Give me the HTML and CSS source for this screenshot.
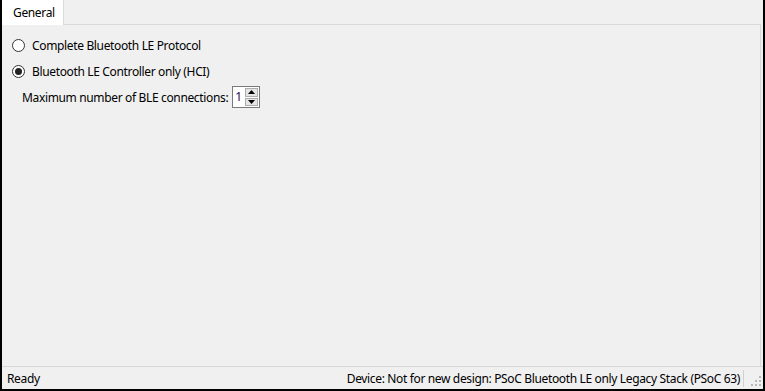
FILE: index.html
```html
<!DOCTYPE html>
<html>
<head>
<meta charset="utf-8">
<link rel="stylesheet" href="styles.css">
</head>
<body>
<div class="window">
  <div class="tabarea">
    <div class="tabstrip">
      <div class="tab">General</div>
      <div class="tabfill"></div>
    </div>
    <div class="panel">
      <label class="radio-row">
        <span class="radio"></span>
        <span>Complete Bluetooth LE Protocol</span>
      </label>
      <label class="radio-row">
        <span class="radio checked"></span>
        <span>Bluetooth LE Controller only (HCI)</span>
      </label>
      <div class="field-row">
        <span>Maximum number of BLE connections:</span>
        <div class="spin">
          <span class="spin-value">1</span>
          <div class="spin-buttons">
            <div class="spin-btn"><svg width="7" height="4" viewBox="0 0 7 4"><path d="M0 4 L3.5 0 L7 4 Z" fill="#000"/></svg></div>
            <div class="spin-btn"><svg width="7" height="4" viewBox="0 0 7 4"><path d="M0 0 L3.5 4 L7 0 Z" fill="#000"/></svg></div>
          </div>
        </div>
      </div>
    </div>
  </div>
  <div class="statusbar">
    <span class="status-left">Ready</span>
    <span class="status-right">Device: Not for new design: PSoC Bluetooth LE only Legacy Stack (PSoC 63)</span>
    <span class="sep"></span>
    <svg class="grip" width="10" height="10" viewBox="0 0 10 10">
      <rect x="8" y="0" width="2" height="2" fill="#b8b8b8"/>
      <rect x="4" y="4" width="2" height="2" fill="#b8b8b8"/>
      <rect x="8" y="4" width="2" height="2" fill="#b8b8b8"/>
      <rect x="0" y="8" width="2" height="2" fill="#b8b8b8"/>
      <rect x="4" y="8" width="2" height="2" fill="#b8b8b8"/>
      <rect x="8" y="8" width="2" height="2" fill="#b8b8b8"/>
    </svg>
  </div>
</div>
</body>
</html>
```
FILE: styles.css
```css
html, body {
  margin: 0;
  padding: 0;
}
body {
  font-family: "Noto Sans", "Open Sans", sans-serif;
  font-size: 12px;
  letter-spacing: -0.35px;
  color: #000;
}
.window {
  width: 765px;
  height: 391px;
  box-sizing: border-box;
  border: 2px solid #000;
  border-top: 0;
  background: #f0f0f0;
  display: flex;
  flex-direction: column;
}
.tabarea {
  flex: 1;
  display: flex;
  flex-direction: column;
  padding-right: 2px;
}
.tabstrip {
  height: 25px;
  display: flex;
  flex: none;
}
.tab {
  width: 62px;
  background: #fff;
  border-right: 1px solid #d9d9d9;
  box-sizing: border-box;
  padding: 4px 0 0 11px;
}
.tabfill {
  flex: 1;
  border-bottom: 1px solid #d9d9d9;
  box-sizing: border-box;
}
.panel {
  flex: 1;
  border-right: 1px solid #d9d9d9;
  padding: 7px 0 0 10px;
  display: flex;
  flex-direction: column;
}
.radio-row {
  display: flex;
  align-items: center;
  height: 26px;
  gap: 7px;
}
.radio {
  width: 11px;
  height: 11px;
  border: 1px solid #333;
  border-radius: 50%;
  background: #fff;
  box-sizing: content-box;
  position: relative;
}
.radio.checked::after {
  content: "";
  position: absolute;
  left: 2px;
  top: 2px;
  width: 7px;
  height: 7px;
  border-radius: 50%;
  background: #222;
}
.field-row {
  display: flex;
  align-items: center;
  padding-left: 10px;
  gap: 4px;
  height: 26px;
}
.spin {
  display: flex;
  width: 28px;
  height: 22px;
  box-sizing: border-box;
  border: 1px solid #7a7a7a;
  background: #fff;
}
.spin-value {
  flex: 1;
  padding-left: 2px;
  line-height: 20px;
  color: #2a0a4a;
}
.spin-buttons {
  width: 13px;
  display: flex;
  flex-direction: column;
  padding: 1px 1px 1px 0;
  gap: 1px;
}
.spin-btn {
  flex: 1;
  background: #e5e5e5;
  border: 1px solid #adadad;
  display: flex;
  align-items: center;
  justify-content: center;
}
.statusbar {
  height: 23px;
  flex: none;
  border-top: 1px solid #d7d7d7;
  box-sizing: border-box;
  display: flex;
  align-items: center;
  padding-left: 5px;
}
.status-left {
  flex: 1;
}
.status-right {
  padding-right: 3px;
}
.sep {
  width: 1px;
  height: 17px;
  background: #d0d0d0;
}
.grip {
  margin: 6px 2px 0 7px;
}
```
